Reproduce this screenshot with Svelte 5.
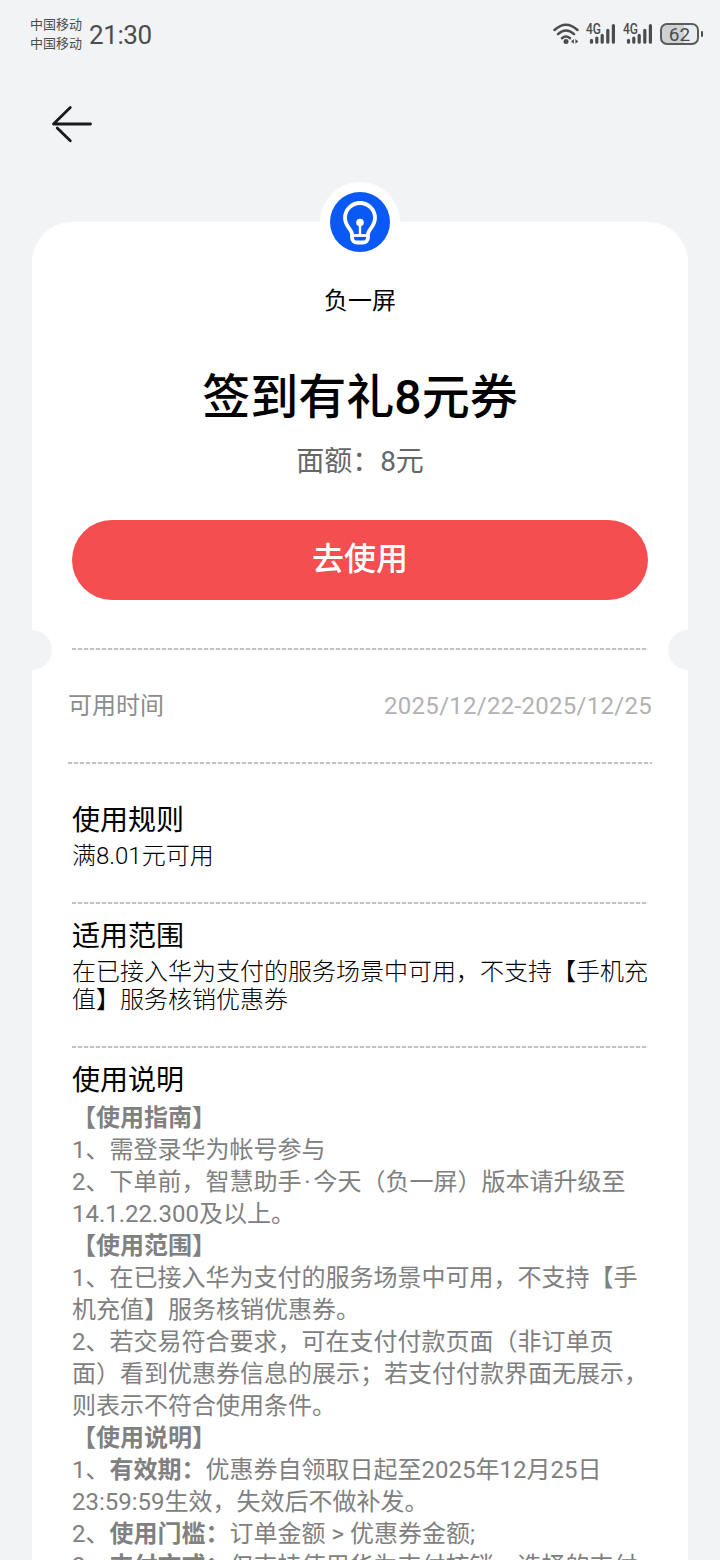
<script lang="ts">
	interface Part {
		text: string;
		bold?: boolean;
		dot?: boolean;
	}

	const carriers = ['中国移动', '中国移动'];

	const scope = ['在已接入华为支付的服务场景中可用，不支持【手机充', '值】服务核销优惠券'];

	const notes: Part[][] = [
		[{ text: '【使用指南】', bold: true }],
		[{ text: '1、需登录华为帐号参与' }],
		[{ text: '2、下单前，智慧助手' }, { text: '·', dot: true }, { text: '今天（负一屏）版本请升级至' }],
		[{ text: '14.1.22.300及以上。' }],
		[{ text: '【使用范围】', bold: true }],
		[{ text: '1、在已接入华为支付的服务场景中可用，不支持【手' }],
		[{ text: '机充值】服务核销优惠券。' }],
		[{ text: '2、若交易符合要求，可在支付付款页面（非订单页' }],
		[{ text: '面）看到优惠券信息的展示；若支付付款界面无展示，' }],
		[{ text: '则表示不符合使用条件。' }],
		[{ text: '【使用说明】', bold: true }],
		[{ text: '1、' }, { text: '有效期：', bold: true }, { text: '优惠券自领取日起至2025年12月25日' }],
		[{ text: '23:59:59生效，失效后不做补发。' }],
		[{ text: '2、' }, { text: '使用门槛：', bold: true }, { text: '订单金额 > 优惠券金额;' }],
		[{ text: '3、' }, { text: '支付方式：', bold: true }, { text: '仅支持使用华为支付核销，选择的支付' }]
	];
</script>

{#snippet signal()}
	<svg class="signal" width="30" height="24" viewBox="0 0 30 24">
		<text x="0" y="12.4" font-size="14.5" font-weight="500" textLength="15" lengthAdjust="spacingAndGlyphs">4G</text>
		<g stroke="#4b4c4e" stroke-width="3.2" stroke-linecap="round">
			<path d="M5.5 18.4v1.8M10.8 16v4.2M16.2 13.4v6.8M21.8 8.4v11.8M27.4 3.6v16.6" />
		</g>
	</svg>
{/snippet}

<div class="screen">
	<header class="status">
		<div class="carriers">
			{#each carriers as carrier}
				<span>{carrier}</span>
			{/each}
		</div>
		<span class="time">21:30</span>
		<div class="indicators">
			<svg class="wifi" width="26" height="22" viewBox="0 0 26 22" fill="none" stroke="#4b4c4e" stroke-width="2.5" stroke-linecap="round">
				<path d="M1.5 7Q13 -3.6 24.5 7" />
				<path d="M5 11.2Q13 3.8 21 11.2" />
				<path d="M9 15.2Q13 11.8 17 15.2" />
				<circle cx="13" cy="18.4" r="2.5" fill="#4b4c4e" stroke="none" />
				<path d="M20.9 16v4.8l-2.9-2.4zM22.4 16v4.8l2.9-2.4z" fill="#4b4c4e" stroke="none" />
			</svg>
			{@render signal()}
			{@render signal()}
			<div class="battery"><span>62</span></div>
		</div>
	</header>

	<nav class="nav">
		<svg width="44" height="40" viewBox="0 0 44 40" fill="none" stroke="#191a1c" stroke-width="2.8" stroke-linecap="round" stroke-linejoin="round">
			<path d="M20.3 3.4 3.5 20H40.5" />
			<path d="M7.2 24 20.3 36.8" />
		</svg>
	</nav>

	<main class="card">
		<div class="logo">
			<svg width="60" height="60" viewBox="0 0 60 60" fill="none" stroke="#fff" stroke-width="3.8" stroke-linejoin="round">
				<circle cx="30" cy="30" r="30" fill="#0a59f7" stroke="none" />
				<path d="M22 43.5V42C22 37.5 15 34.5 15 26a15 15 0 0 1 30 0C45 34.5 38 37.5 38 42v3.5a5 5 0 0 1-5 5h-6a5 5 0 0 1-5-5z" />
				<path d="M22 43.5h16" stroke-width="2.8" />
				<path d="M30 31v12" stroke-width="2.4" />
				<circle cx="30" cy="30.5" r="3.8" fill="#fff" stroke="none" />
			</svg>
		</div>

		<p class="brand">负一屏</p>
		<h1>签到有礼8元券</h1>
		<p class="value">面额：8元</p>
		<button class="use">去使用</button>

		<div class="notches">
			<div class="divider"></div>
		</div>

		<div class="period">
			<span class="label">可用时间</span>
			<span class="dates">2025/12/22-2025/12/25</span>
		</div>

		<section class="rules">
			<h2>使用规则</h2>
			<p class="detail">满8.01元可用</p>
		</section>
		<div class="divider"></div>
		<section class="scope">
			<h2>适用范围</h2>
			{#each scope as line}
				<p class="detail">{line}</p>
			{/each}
		</section>
		<div class="divider"></div>
		<section class="notes">
			<h2>使用说明</h2>
			{#each notes as line}
				<p class="note">
					{#each line as part}<span class:bold={part.bold} class:dot={part.dot}>{part.text}</span>{/each}
				</p>
			{/each}
		</section>
	</main>
</div>

<style>
	:global(body) {
		background: #f1f3f5;
	}

	.screen {
		width: 720px;
		height: 1560px;
		overflow: hidden;
		display: flex;
		flex-direction: column;
		background: #f1f3f5;
		color: #000;
		font-family: Roboto, 'Noto Sans CJK SC', sans-serif;
		white-space: nowrap;
		text-spacing-trim: space-all;
	}

	h1,
	h2,
	p {
		margin: 0;
		font-weight: 400;
	}

	/* Status bar */
	.status {
		flex: none;
		display: flex;
		align-items: center;
		height: 68px;
		padding: 0 17px 0 30px;
		box-sizing: border-box;
		color: #4b4c4e;
	}

	.carriers {
		display: flex;
		flex-direction: column;
		font-size: 13px;
		line-height: 19px;
	}

	.time {
		margin-left: 7px;
		padding-top: 1px;
		font-size: 26px;
		line-height: 30px;
		letter-spacing: -0.4px;
	}

	.indicators {
		display: flex;
		align-items: center;
		margin-left: auto;
	}

	.signal {
		margin-left: 7px;
		overflow: visible;
		fill: #4b4c4e;
	}

	.battery {
		position: relative;
		width: 39px;
		height: 22px;
		margin: 0 4px 0 7px;
		box-sizing: border-box;
		border: 2px solid #5a5b5d;
		border-radius: 7px;
		background: linear-gradient(90deg, #cfd0d2 62%, #e9ebed 62%);
		font-size: 19px;
		line-height: 19px;
		text-align: center;
	}

	.battery::after {
		content: '';
		position: absolute;
		top: 6px;
		right: -6px;
		width: 2px;
		height: 6px;
		border-radius: 1px;
		background: #4b4c4e;
	}

	.nav {
		flex: none;
		height: 154px;
		padding: 36px 0 0 50px;
		box-sizing: border-box;
	}

	/* Coupon card */
	.card {
		flex: none;
		display: flex;
		flex-direction: column;
		width: 656px;
		min-height: 1400px;
		margin: 0 auto;
		padding: 0 40px;
		box-sizing: border-box;
		border-radius: 40px 40px 0 0;
		background: #fff;
	}

	.logo {
		align-self: center;
		display: flex;
		margin-top: -40px;
		padding: 10px;
		border-radius: 50%;
		background: #fff;
	}

	.brand {
		margin-top: 21px;
		font-size: 24px;
		line-height: 36px;
		text-align: center;
	}

	h1 {
		margin-top: 47px;
		font-size: 48px;
		font-weight: 500;
		line-height: 64px;
		text-align: center;
	}

	.value {
		margin-top: 14px;
		color: #666;
		font-size: 28px;
		line-height: 36px;
		text-align: center;
	}

	.use {
		height: 80px;
		margin-top: 40px;
		padding: 0 0 2px;
		border: 0;
		border-radius: 40px;
		background: #f44e50;
		color: #fff;
		font-family: inherit;
		font-size: 32px;
		font-weight: 500;
		line-height: 40px;
	}

	.divider {
		height: 2px;
		background: repeating-linear-gradient(90deg, #c2c2c2 0 4px, #f4f4f4 4px 6px);
	}

	/* Half circles cut into both card edges */
	.notches {
		height: 40px;
		margin: 30px -40px 0;
		padding: 18px 40px 0;
		box-sizing: border-box;
		background:
			radial-gradient(circle at 0 50%, #f1f3f5 19.5px, transparent 20.5px),
			radial-gradient(circle at 100% 50%, #f1f3f5 19.5px, transparent 20.5px);
	}

	.period {
		display: flex;
		justify-content: space-between;
		align-items: center;
		height: 94px;
		margin: 0 -4px;
		padding-bottom: 22px;
		box-sizing: border-box;
		background: repeating-linear-gradient(90deg, #c2c2c2 0 4px, #f4f4f4 4px 6px) bottom / 100% 2px no-repeat;
		font-size: 24px;
		line-height: 36px;
	}

	.label {
		color: #8c8c8c;
	}

	.dates {
		color: #b2b2b2;
		letter-spacing: 0.28px;
	}

	h2 {
		font-size: 28px;
		line-height: 36px;
	}

	.detail {
		font-size: 24px;
		font-weight: 300;
		line-height: 28px;
	}

	.rules {
		height: 138px;
		padding-top: 39px;
		box-sizing: border-box;
	}

	.rules h2,
	.scope h2 {
		margin-bottom: 3px;
	}

	.scope {
		height: 142px;
		padding-top: 15px;
		box-sizing: border-box;
	}

	.notes {
		padding-top: 15px;
	}

	.notes h2 {
		margin-bottom: 3px;
	}

	.note {
		color: #808080;
		font-size: 24px;
		line-height: 32px;
	}

	.bold {
		font-weight: 700;
	}

	.dot {
		display: inline-block;
		width: 12px;
		text-align: center;
	}
</style>
